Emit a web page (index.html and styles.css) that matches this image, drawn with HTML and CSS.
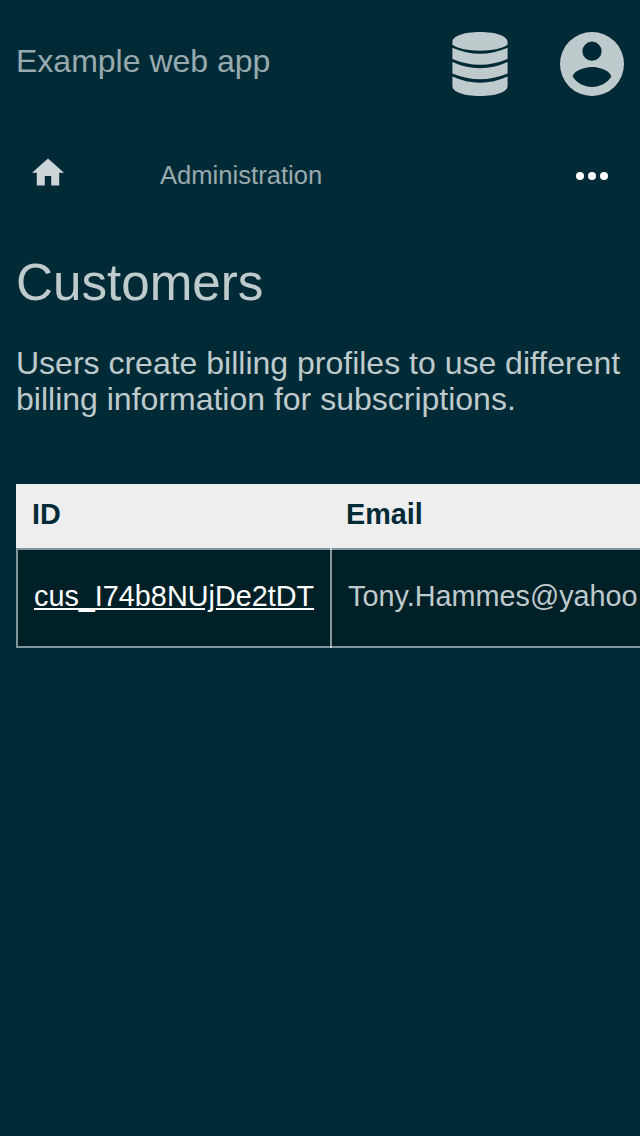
FILE: index.html
```html
<!DOCTYPE html>
<html lang="en">
<head>
<meta charset="utf-8">
<title>Customers</title>
<link rel="stylesheet" href="styles.css">
</head>
<body>
<header class="header">
  <span class="brand">Example web app</span>
  <span class="actions">
    <svg class="db" viewBox="0 0 56 64"><path d="M.4 10C.4 4 12 0 28 0S55.600 4 55.600 10V12.800C46 20.600 10 20.600 .4 12.800ZM.4 15.700Q28 27.800 55.600 15.700V27Q28 38.500 .4 27ZM.4 30Q28 42.500 55.600 30V41.500Q28 53 .4 41.500ZM.4 44.500Q28 57 55.600 44.500V54C55.600 60 44 64 28 64S.4 60 .4 54Z"/></svg>
    <svg class="account" viewBox="2 2 20 20"><path d="M12 19.200C9.500 19.200 7.290 17.920 6 16C6.030 14 10 12.900 12 12.900C14 12.900 17.970 14 18 16C16.710 17.920 14.500 19.200 12 19.200M12 5A3 3 0 0 1 15 8A3 3 0 0 1 12 11A3 3 0 0 1 9 8A3 3 0 0 1 12 5M12 2A10 10 0 0 0 2 12A10 10 0 0 0 12 22A10 10 0 0 0 22 12A10 10 0 0 0 12 2Z"/></svg>
  </span>
</header>
<nav class="nav">
  <svg class="home" viewBox="0 0 32 28"><path d="M16 .400L32 14.800H27.200V27.600H19.200V18H12.800V27.600H4.800V14.800H0Z"/></svg>
  <span class="crumb">Administration</span>
  <svg class="more" viewBox="0 0 32 8"><circle cx="4" cy="4" r="4"/><circle cx="16" cy="4" r="4"/><circle cx="28" cy="4" r="4"/></svg>
</nav>
<main class="main">
  <h1 class="title">Customers</h1>
  <p class="intro">Users create billing profiles to use different billing information for subscriptions.</p>
  <div class="table">
    <div class="row head"><span class="cell">ID</span><span class="cell">Email</span></div>
    <div class="row body"><span class="cell"><a class="link" href="#">cus_I74b8NUjDe2tDT</a></span><span class="cell">Tony.Hammes@yahoo</span></div>
  </div>
</main>
</body>
</html>
```
FILE: styles.css
```css
* { box-sizing: border-box; }
body { margin: 0; height: 1136px; overflow: hidden; background: #002b36; color: #bfcacd; font: 32px/36px "Liberation Sans", Arial, sans-serif; }
svg { display: block; fill: currentColor; }
.header { height: 128px; padding: 0 16px; display: flex; justify-content: space-between; align-items: center; }
.brand { color: #99aaaf; padding-bottom: 6px; }
.actions { display: flex; gap: 52px; }
.db { width: 56px; height: 64px; }
.account { width: 64px; height: 64px; }
.nav { height: 96px; padding: 0 32px; display: flex; align-items: center; }
.home { width: 32px; height: 28px; margin-bottom: 8px; color: #ccd5d7; }
.crumb { margin-left: 96px; padding-bottom: 2px; font-size: 25.6px; color: #99aaaf; }
.more { width: 32px; height: 8px; margin-left: auto; color: #fff; }
.main { padding: 30px 0 0 16px; }
.title { margin: 0; font-size: 51.2px; line-height: 58px; font-weight: 400; }
.intro { margin: 33px 16px 67px 0; }
.table { font-size: 28.8px; line-height: 32px; }
.row { display: grid; grid-template-columns: 314px 1fr; }
.head { height: 64px; background: #eee; color: #002b36; font-weight: 700; }
.head .cell { padding: 14px 16px; }
.body { height: 100px; grid-template-columns: 312px 1fr; background: #002028; border: 2px solid #7f959a; border-right: 0; }
.body .cell { position: relative; padding: 30px 0 0 16px; }
.body .cell + .cell { padding-left: 18px; }
/* Translucent divider, brighter where it crosses the row borders */
.body .cell + .cell::before { content: ""; position: absolute; left: 0; top: -2px; bottom: -2px; width: 2px; background: rgba(255, 255, 255, .53); }
.link { color: #fff; }
```
